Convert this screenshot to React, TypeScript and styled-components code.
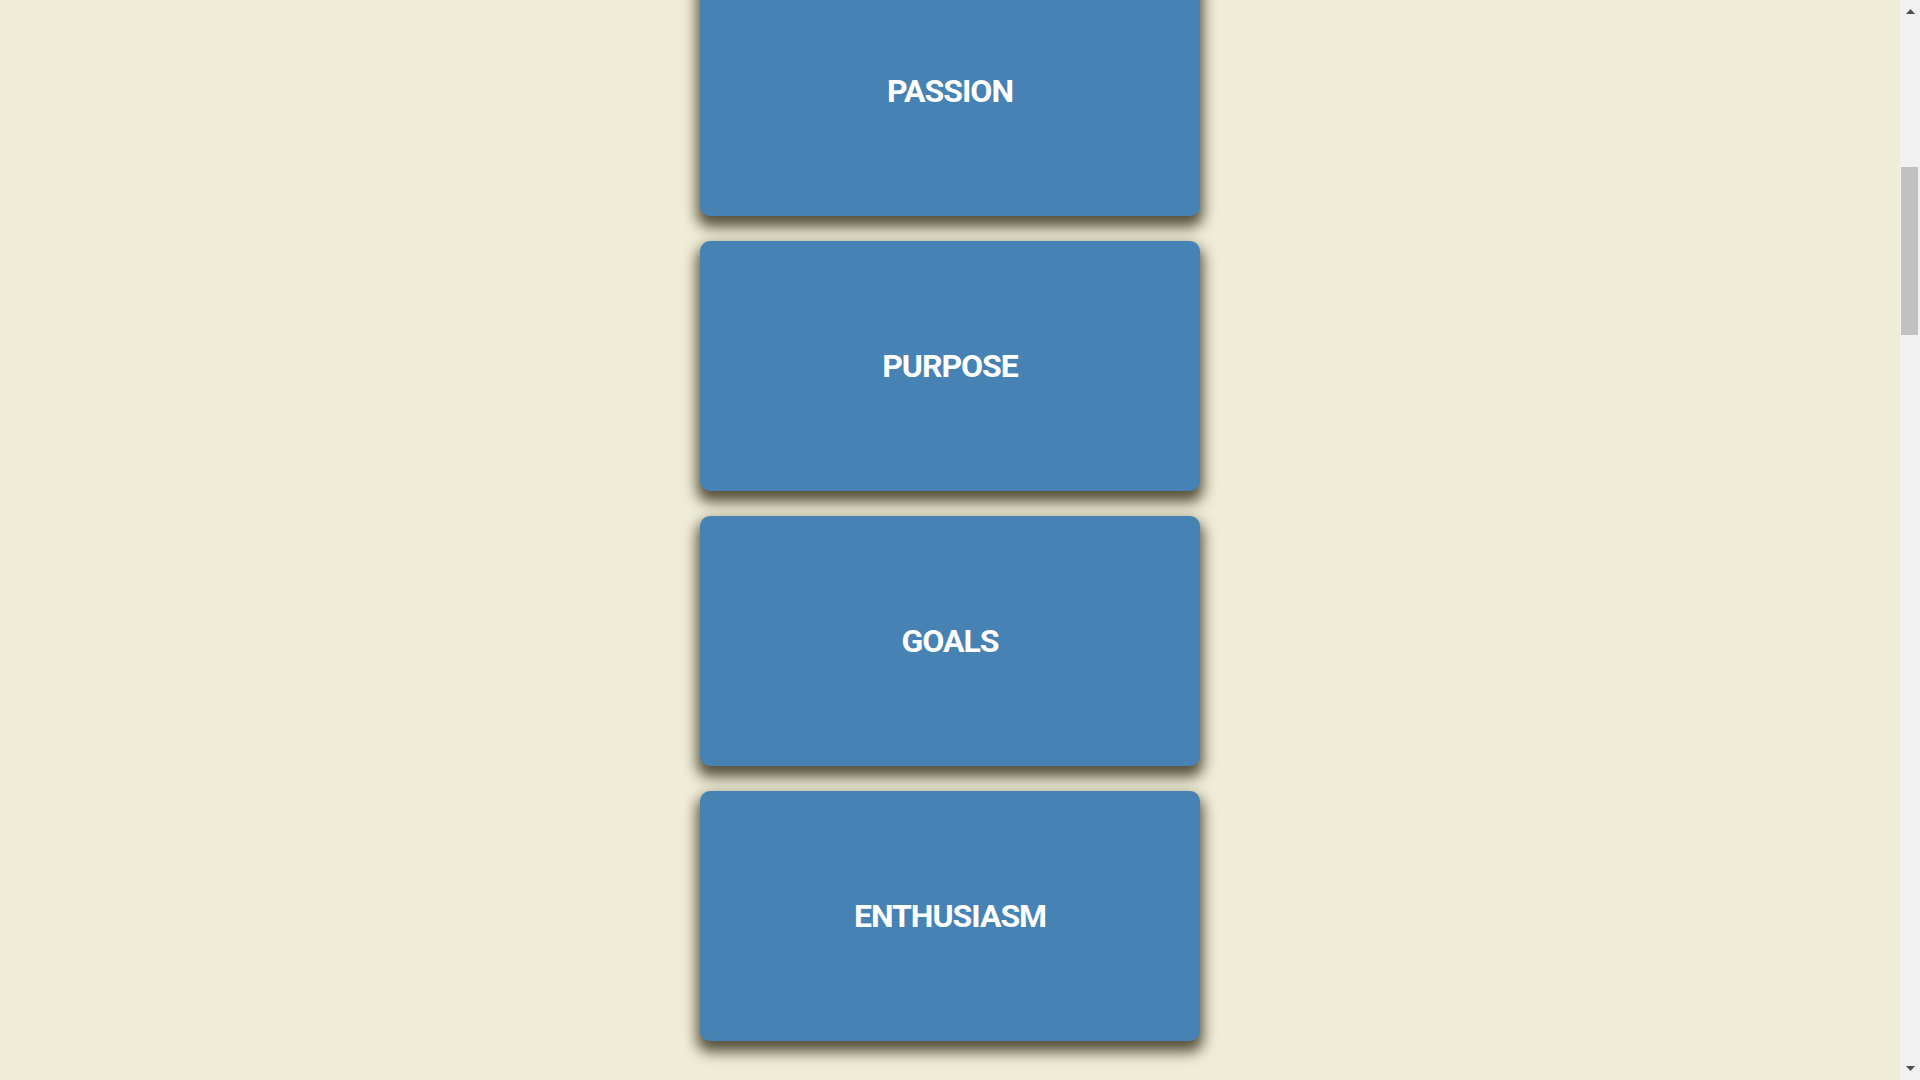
import { useLayoutEffect } from 'react';
import styled, { createGlobalStyle } from 'styled-components';

const words = ['PASSION', 'PURPOSE', 'GOALS', 'ENTHUSIASM'];

function App() {
  // the page was captured partway down
  useLayoutEffect(() => {
    window.scrollTo(0, 943);
  }, []);

  return (
    <>
      <GlobalStyle />
      <CardList>
        {words.map((word) => (
          <Card key={word}>
            <CardTitle>{word}</CardTitle>
          </Card>
        ))}
      </CardList>
      <ScrollRail>
        <ScrollButton $up>
          <svg width="9" height="5" viewBox="0 0 9 5">
            <polygon points="4.5,0 9,5 0,5" fill="#505050" />
          </svg>
        </ScrollButton>
        <ScrollTrack>
          <ScrollThumb />
        </ScrollTrack>
        <ScrollButton>
          <svg width="9" height="5" viewBox="0 0 9 5">
            <polygon points="0,0 9,0 4.5,5" fill="#505050" />
          </svg>
        </ScrollButton>
      </ScrollRail>
    </>
  );
}

const GlobalStyle = createGlobalStyle`
  html {
    scroll-behavior: auto;
  }
  body {
    margin: 0;
    background-color: #efedd7;
    font-family: Roboto, 'Liberation Sans', sans-serif;
  }
`;

const CardList = styled.main`
  box-sizing: border-box;
  min-height: 6686px;
  display: flex;
  flex-direction: column;
  align-items: center;
  gap: 25px;
  padding: 909px 20px 0 0;
`;

const Card = styled.div`
  display: flex;
  justify-content: center;
  align-items: center;
  width: 500px;
  height: 250px;
  flex-shrink: 0;
  background-color: #4682b4;
  border-radius: 10px;
  box-shadow: 0 8px 14px 3px rgba(35, 28, 10, 0.75);
`;

const CardTitle = styled.h2`
  margin: 0;
  color: #ffffff;
  font-size: 32px;
  font-weight: 700;
  letter-spacing: -1px;
`;

const ScrollRail = styled.div`
  position: fixed;
  top: 0;
  right: 0;
  bottom: 0;
  width: 20px;
  display: flex;
  flex-direction: column;
  background-color: #f1f1f1;
`;

const ScrollButton = styled.div<{ $up?: boolean }>`
  height: 20px;
  flex-shrink: 0;
  display: flex;
  justify-content: center;
  align-items: center;
  box-sizing: border-box;
  padding: ${(p) => (p.$up ? '3px 0 0' : '0 0 3px')};
`;

const ScrollTrack = styled.div`
  flex: 1;
  padding-top: 147px;
`;

const ScrollThumb = styled.div`
  height: 168px;
  margin: 0 2px 0 1px;
  background-color: #c1c1c1;
`;

export default App;
